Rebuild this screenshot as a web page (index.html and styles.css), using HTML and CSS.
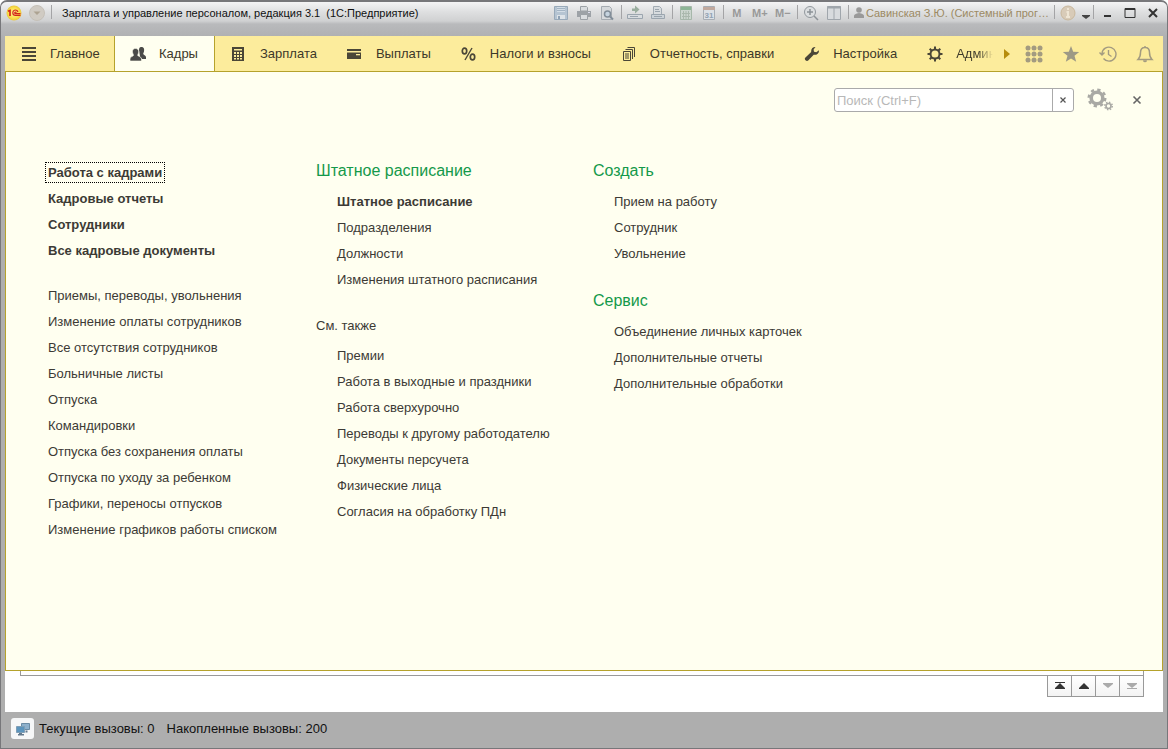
FILE: index.html
```html
<!DOCTYPE html>
<html lang="ru">
<head>
<meta charset="utf-8">
<title>Зарплата и управление персоналом, редакция 3.1 (1С:Предприятие)</title>
<link rel="stylesheet" href="styles.css">
</head>
<body>
<div class="window">
  <header class="titlebar">
    <svg class="logo" viewBox="0 0 16 16"><defs><radialGradient id="sun"><stop offset="0" stop-color="#fff6a0"/><stop offset=".7" stop-color="#fbe04a"/><stop offset="1" stop-color="#e9c63c"/></radialGradient></defs><circle cx="8" cy="8" r="7.500" fill="url(#sun)"/><path d="M2 6.300 4 5.500V11" fill="none" stroke="#d3281c" stroke-width="1.700"/><path d="M12 7C11.500 5.500 10.500 5 9.500 5 7.800 5 6.800 6.300 6.800 7.800 6.800 9.500 8 10.400 9.500 10.400H14.500M10.500 7.500C9.500 6.700 8.700 7.200 8.700 7.900 8.700 8.500 9.200 8.700 9.700 8.700H14.500" fill="none" stroke="#d3281c" stroke-width="1.200"/></svg>
    <button class="tb main-menu" aria-label="Главное меню"><svg viewBox="0 0 16 16"><circle cx="8" cy="8" r="7.500" fill="#d0cbc3" stroke="#c5c0b8"/><path d="M4.500 6.500h7L8 10z" fill="#ada392"/></svg></button>
    <span class="sep"></span>
    <h1 class="title">Зарплата и управление персоналом, редакция 3.1 &nbsp;(1С:Предприятие)</h1>
    <div class="tools">
      <button class="tb" aria-label="Сохранить"><svg viewBox="0 0 16 16"><path d="M1.500 1.500h13v13h-13z" fill="#b5c4d2" stroke="#98a9b9"/><path d="M4 2h8v5H4z" fill="#d3dde6"/><path d="M4 3.500h8M4 5.500h8" stroke="#a3b4c4"/><path d="M4 10h8v4H4z" fill="#dde3e8"/><path d="M5 11h2v3H5z" fill="#8fa2b5"/></svg></button>
      <button class="tb" aria-label="Печать"><svg viewBox="0 0 16 16"><path d="M4.500 1.500h6l1 1V6h-7z" fill="#dadde0" stroke="#9ca1a6"/><path d="M1 6h14v6H1z" fill="#9da2a7"/><path d="M4.500 9.500h7v5h-7z" fill="#dadde0" stroke="#9ca1a6"/><path d="M12 7h2v1h-2z" fill="#dde"/></svg></button>
      <button class="tb" aria-label="Просмотр"><svg viewBox="0 0 16 16"><path d="M2.500 1.500h8l2 2v11h-10z" fill="#d6d9dc" stroke="#a5abb1"/><circle cx="8.500" cy="9" r="3" fill="#c5d3df" stroke="#818d98" stroke-width="1.500"/><path d="m11 11.500 3 3" stroke="#818d98" stroke-width="2"/></svg></button>
      <span class="sep"></span>
      <button class="tb" aria-label="Получить ссылку"><svg viewBox="0 0 16 16"><path d="M.500 9.500h15v4H.500z" fill="#d8dcdf" stroke="#9ba5ae"/><path d="M3 11.500h8" stroke="#9ba5ae"/><path d="M5 3.500h3V.500l4.500 4-4.500 4V6H5z" fill="#9aae9f"/></svg></button>
      <button class="tb" aria-label="Перейти по ссылке"><svg viewBox="0 0 16 16"><path d="M3.500 9V1.500h6l2 2V9" fill="#d8dcdf" stroke="#a2abb3"/><path d="M1.500 9.500h13v4h-13z" fill="#cbd2d8" stroke="#9ba5ae"/><path d="M4 11.500h8M5 4.500h4M5 6.500h5" stroke="#9ba5ae"/></svg></button>
      <span class="sep"></span>
      <button class="tb" aria-label="Калькулятор"><svg viewBox="0 0 16 16"><path d="M2.500 1.500h11v13h-11z" fill="#cbd5ce" stroke="#a6b7aa"/><path d="M3 2h10v3H3z" fill="#8eb697"/><path d="M5.500 6v8M8 6v8M10.500 6v8M4 8.500h8M4 11.500h8" stroke="#aab8ad"/></svg></button>
      <button class="tb" aria-label="Календарь"><svg viewBox="0 0 16 16"><path d="M2.500 1.500h11v13h-11z" fill="#dce1e6" stroke="#a8aeb5"/><path d="M2 2h12v3H2z" fill="#c2aa9f"/><text x="8" y="13" text-anchor="middle" font-size="8" font-weight="bold" fill="#91a1b2">31</text></svg></button>
      <span class="sep"></span>
      <button class="tb mem">M</button><button class="tb mem">M+</button><button class="tb mem">M−</button>
      <span class="sep"></span>
      <button class="tb" aria-label="Масштаб"><svg viewBox="0 0 16 16"><circle cx="7" cy="7" r="5.500" fill="#dcdfe1" stroke="#92989d"/><path d="M7 4v6M4 7h6M11 11l4 4" stroke="#8c9297" stroke-width="1.500"/></svg></button>
      <button class="tb" aria-label="Панели"><svg viewBox="0 0 16 16"><path d="M1.500 1.500h13v13h-13zM8 3v12" fill="#d8dbde" stroke="#a0a6ac"/><path d="M1 2.500h14" stroke="#a0a6ac" stroke-width="2"/></svg></button>
      <span class="sep"></span>
      <svg class="person" viewBox="0 0 10 12"><circle cx="5" cy="3" r="2.800" fill="#999"/><path d="M0 11V9q0-2 5-3 5 1 5 3v2z" fill="#999"/></svg>
      <span class="user">Савинская З.Ю. (Системный прог…</span>
      <span class="sep"></span>
      <button class="tb" aria-label="Информация"><svg viewBox="0 0 16 16"><circle cx="8" cy="8" r="7" fill="#d8cbb8" stroke="#c9b89d"/><path d="M8 3v2M6.500 7H8v5M6 12h4" fill="none" stroke="#eee5d4" stroke-width="2"/></svg></button>
      <button class="tb small" aria-label="Ещё"><svg viewBox="0 0 10 16"><path d="M1 10h8v1L5 14 1 11z" fill="#444"/></svg></button>
      <span class="sep"></span>
      <button class="tb win" aria-label="Свернуть"><svg viewBox="0 0 14 14"><path d="M4 10h7" stroke="#333" stroke-width="2"/></svg></button>
      <button class="tb win" aria-label="Развернуть"><svg viewBox="0 0 14 14"><path d="M2 2.500h10v9H2z" fill="none" stroke="#333"/><path d="M2 3h10" stroke="#333" stroke-width="2"/></svg></button>
      <button class="tb win" aria-label="Закрыть"><svg viewBox="0 0 14 14"><path d="m3 3 8 8M11 3l-8 8" stroke="#333" stroke-width="2"/></svg></button>
    </div>
  </header>

  <nav class="sections">
    <a class="section first" href="#"><svg viewBox="0 0 16 16"><path d="M1 2h14M1 6h14M1 10h14M1 14h14" stroke="#4a4637" stroke-width="2"/></svg>Главное</a>
    <a class="section active" href="#"><svg viewBox="0 0 16 16"><path d="M11 1c3 0 3.500 2 3 4.500-.3 1.200-.8 2-.8 2.500 0 .8 2.800 1.500 2.800 3V13h-4c-.5-1.500-2-2-2-2.500L9 4c0-2 .8-3 2-3z" fill="#4a4a48"/><path d="M5.500 2.500C8.500 2.500 9 5 8.500 7c-.3 1.200-.8 1.600-.8 2.300 0 1 3.800 1.300 3.800 3.700v2H0v-2c0-2.400 3.500-2.700 3.500-3.700 0-.7-.5-1.100-.8-2.300C2.200 5 2.500 2.500 5.500 2.500z" fill="#4a4a48" stroke="#fffff0" stroke-width=".6"/></svg>Кадры</a>
    <a class="section" href="#"><svg viewBox="0 0 16 16"><path d="M1 1h12v14H1z" fill="#4a4637"/><path d="M3 3h8v1.500H3zM3 6h2v2H3zM6 6h2v2H6zM9 6h2v2H9zM3 9h2v2H3zM6 9h2v2H6zM9 9h2v2H9zM3 12h2v1.500H3zM6 12h2v1.500H6zM9 12h2v1.500H9z" fill="#fcec9c"/></svg>Зарплата</a>
    <a class="section" href="#"><svg viewBox="0 0 16 16"><path d="M0 3h14v2H0zM0 6.500h14V13H0z" fill="#4a4637"/><path d="M9 8h4v1.300H9z" fill="#fcec9c"/></svg>Выплаты</a>
    <a class="section" href="#"><svg viewBox="0 0 16 16"><path d="M11 2 4 14" stroke="#4a4637" stroke-width="1.400"/><ellipse cx="3.500" cy="5" rx="2.200" ry="2.800" fill="none" stroke="#4a4637" stroke-width="1.700"/><ellipse cx="11.500" cy="11" rx="2.200" ry="2.800" fill="none" stroke="#4a4637" stroke-width="1.700"/></svg>Налоги и взносы</a>
    <a class="section" href="#"><svg viewBox="0 0 16 16"><path d="M2.500 5.500h7v9h-7zM4.500 3.500h7v9.500M6.500 1.500h7v9.500M4 8h4M4 10h4M4 12h4" fill="none" stroke="#4a4637"/></svg>Отчетность, справки</a>
    <a class="section" href="#"><svg viewBox="0 0 16 16"><path d="M11.500 1C9 .8 6.700 2.800 7.200 6L1.200 11.800C-.2 13.400 2.500 16 4.200 14.600L9.700 8.800C12.800 9.300 15.300 7 15 4.200L12.300 6.300 10 5.800 9.600 3.500z" fill="#4a4637"/></svg>Настройка</a>
    <a class="section" href="#"><svg viewBox="0 0 16 16"><circle cx="8" cy="8" r="4.500" fill="none" stroke="#4a4637" stroke-width="2"/><path d="M8 .5V4M8 12v3.500M.5 8H4M12 8h3.500M2.700 2.700 5 5M11 11l2.300 2.300M13.300 2.700 11 5M5 11l-2.300 2.300" stroke="#4a4637" stroke-width="2"/><circle cx="8" cy="8" r="3" fill="#fcec9c"/></svg><span class="fade">Админ</span></a>
    <div class="quick">
      <button class="more" aria-label="Далее"><svg viewBox="0 0 6 10"><path d="M0 0l6 5-6 5z" fill="#b78d0c"/></svg></button>
      <button aria-label="Все функции"><svg viewBox="0 0 18 18"><g fill="#a39b80"><circle cx="3" cy="3" r="2.500"/><circle cx="9" cy="3" r="2.500"/><circle cx="15" cy="3" r="2.500"/><circle cx="3" cy="9" r="2.500"/><circle cx="9" cy="9" r="2.500"/><circle cx="15" cy="9" r="2.500"/><circle cx="3" cy="15" r="2.500"/><circle cx="9" cy="15" r="2.500"/><circle cx="15" cy="15" r="2.500"/></g></svg></button>
      <button aria-label="Избранное"><svg viewBox="0 0 18 18"><path d="m9 1 2.200 5.700 6 .2-4.700 3.900 1.700 6L9 13.400l-5.200 3.400 1.700-6L.8 6.900l6-.2z" fill="#9d9985"/></svg></button>
      <button aria-label="История"><svg viewBox="0 0 18 18"><path d="M4.500 13.500A7 7 0 1 0 3 8.500V10M.5 7.500 3 10l2.500-2.500M9.500 5v4.500l3 2" fill="none" stroke="#a39b80" stroke-width="1.400"/></svg></button>
      <button aria-label="Оповещения"><svg viewBox="0 0 18 18"><path d="M2 14.500h14c-2-2-2.500-3-2.500-7 0-3-1.500-5-4.500-5s-4.500 2-4.500 5c0 4-.5 5-2.500 7zM9 2.500V1M7.500 15.500q1.500 2 3 0" fill="none" stroke="#a39b80" stroke-width="1.500"/></svg></button>
    </div>
  </nav>

  <main class="panel">
    <form class="search-row">
      <div class="search"><input type="text" aria-label="Поиск" placeholder="Поиск (Ctrl+F)"><button type="button" aria-label="Очистить"><svg viewBox="0 0 8 8"><path d="m1.500 1.500 5 5M6.500 1.500l-5 5" stroke="#555" stroke-width="1.200"/></svg></button></div>
      <button class="gears" type="button" aria-label="Настройки"><svg viewBox="0 0 26 24"><circle cx="10" cy="10" r="5.800" fill="none" stroke="#a9a9a4" stroke-width="3.600"/><circle cx="10" cy="10" r="8.300" fill="none" stroke="#a9a9a4" stroke-width="2.400" stroke-dasharray="3.260 3.260"/><circle cx="21.500" cy="18" r="2.500" fill="none" stroke="#a9a9a4" stroke-width="1.600"/><circle cx="21.500" cy="18" r="3.800" fill="none" stroke="#a9a9a4" stroke-width="1.400" stroke-dasharray="1.490 1.490"/></svg></button>
      <button class="close" type="button" aria-label="Закрыть"><svg viewBox="0 0 10 10"><path d="m1.500 1.500 7 7M8.500 1.500l-7 7" stroke="#666" stroke-width="1.600"/></svg></button>
    </form>
    <div class="columns">
      <div class="col first-col">
        <ul class="bold">
          <li><a class="focused" href="#">Работа с кадрами</a></li><li><a href="#">Кадровые отчеты</a></li><li><a href="#">Сотрудники</a></li><li><a href="#">Все кадровые документы</a></li>
        </ul>
        <ul>
          <li><a href="#">Приемы, переводы, увольнения</a></li><li><a href="#">Изменение оплаты сотрудников</a></li><li><a href="#">Все отсутствия сотрудников</a></li><li><a href="#">Больничные листы</a></li><li><a href="#">Отпуска</a></li><li><a href="#">Командировки</a></li><li><a href="#">Отпуска без сохранения оплаты</a></li><li><a href="#">Отпуска по уходу за ребенком</a></li><li><a href="#">Графики, переносы отпусков</a></li><li><a href="#">Изменение графиков работы списком</a></li>
        </ul>
      </div>
      <div class="col">
        <section><h2>Штатное расписание</h2>
        <ul><li><a class="strong" href="#">Штатное расписание</a></li><li><a href="#">Подразделения</a></li><li><a href="#">Должности</a></li><li><a href="#">Изменения штатного расписания</a></li></ul></section>
        <section><h3>См. также</h3>
        <ul><li><a href="#">Премии</a></li><li><a href="#">Работа в выходные и праздники</a></li><li><a href="#">Работа сверхурочно</a></li><li><a href="#">Переводы к другому работодателю</a></li><li><a href="#">Документы персучета</a></li><li><a href="#">Физические лица</a></li><li><a href="#">Согласия на обработку ПДн</a></li></ul></section>
      </div>
      <div class="col">
        <section><h2>Создать</h2>
        <ul><li><a href="#">Прием на работу</a></li><li><a href="#">Сотрудник</a></li><li><a href="#">Увольнение</a></li></ul></section>
        <section><h2>Сервис</h2>
        <ul><li><a href="#">Объединение личных карточек</a></li><li><a href="#">Дополнительные отчеты</a></li><li><a href="#">Дополнительные обработки</a></li></ul></section>
      </div>
    </div>
  </main>

  <div class="under">
    <div class="list-edge"></div>
    <div class="pager">
      <button aria-label="В начало"><svg viewBox="0 0 10 8"><path d="M0 0h10v1H0zM5 1l5 5v1H0V6z" fill="#333"/></svg></button>
      <button aria-label="Вверх"><svg viewBox="0 0 10 8"><path d="M5 1l5 5v1H0V6z" fill="#333"/></svg></button>
      <button disabled aria-label="Вниз"><svg viewBox="0 0 10 8"><path d="M0 1h10v1L5 6 0 2z" fill="#aaa"/></svg></button>
      <button disabled aria-label="В конец"><svg viewBox="0 0 10 8"><path d="M0 1h10v1L5 6 0 2zM0 6h10v1H0z" fill="#aaa"/></svg></button>
    </div>
  </div>

  <footer class="status">
    <button aria-label="Показатели"><svg viewBox="0 0 16 16"><path d="M6.500 2.500h8v6h-8z" fill="#8db0cc" stroke="#6a8ba5"/><path d="M1.500 5.500h8v6h-8z" fill="#5b94bd" stroke="#7e9db5"/><path d="M4 12h3v1h2v1.500H3V13h1zM10.500 9.500h2v2h-2z" fill="#63798c"/></svg></button>
    <span>Текущие вызовы: 0</span><span>Накопленные вызовы: 200</span>
  </footer>
</div>
</body>
</html>
```
FILE: styles.css
```css
* { box-sizing: border-box; }
html, body { height: 100%; margin: 0; }
body { font-family: "Liberation Sans", Arial, sans-serif; font-size: 13px; color: #3c3a35; background: #fff; }
button { margin: 0; padding: 0; border: 0; background: none; font: inherit; color: inherit; display: flex; align-items: center; justify-content: center; }
a { color: inherit; text-decoration: none; }
svg { display: block; flex: none; }
ul { list-style: none; margin: 0; padding: 0; }

.window { min-height: 100%; display: flex; flex-direction: column; padding: 0 4px 3px; border: 1px solid #77777a; border-top-width: 2px; border-radius: 7px 7px 0 0; background: linear-gradient(#f4f4f5 0, #dedfe0 10px, #d0d1d2 19px, #b9babc 22px, #b0b1b3 34px, #aeaeae 40px); }
.titlebar { display: flex; height: 34px; padding: 3px 2px 0 1px; align-items: flex-start; }
.logo, .tb svg { width: 16px; height: 16px; }
.tb { height: 16px; min-width: 16px; }
.main-menu { margin-left: 7px; }
.sep { width: 1px; height: 14px; margin: 0 6px; background: #a4a4a6; }
.title { margin: 0 0 0 4px; font-size: 11px; line-height: 17px; font-weight: normal; color: #111; white-space: nowrap; }
.tools { display: flex; margin-left: auto; gap: 7px; }
.tools .sep { margin: 0 -2px 0 -1px; }
.mem { font-size: 11px; font-weight: bold; color: #999; }
.person { width: 10px; height: 12px; margin-top: 2px; }
.user { margin: 0 -1px 0 -5px; font-size: 11px; line-height: 17px; color: #9c8a63; white-space: nowrap; }
.tb.small { min-width: 10px; margin: 0 -4px 0 -2px; }
.small svg { width: 10px; }
.win svg { width: 14px; height: 14px; }

.sections { display: flex; height: 36px; background: #fcec9c; border-bottom: 1px solid #b5a22c; }
.section { display: flex; align-items: center; gap: 13px; padding: 0 14px 0 16px; white-space: nowrap; color: #3c3829; }
.section svg { width: 16px; height: 16px; }
.first { width: 109px; }
.active { width: 101px; padding-left: 15px; background: #fffff0; border: solid #b5a22c; border-width: 0 1px; }
.fade { color: transparent; background: linear-gradient(90deg, #3c3829 22px, #fcec9c 37px); background-clip: text; -webkit-background-clip: text; }
.section:last-of-type { padding-right: 0; }
.quick { display: flex; align-items: center; gap: 19px; margin-left: auto; padding-right: 9px; }
.quick svg { width: 18px; height: 18px; }
.quick .more { margin-right: -4px; }
.quick .more svg { width: 6px; height: 10px; }

.panel { flex: 1; background: #fffff0; border: 1px solid #b5a22c; border-top: 0; }
.search-row { display: flex; justify-content: flex-end; align-items: center; height: 56px; padding-right: 20px; }
.search { display: flex; width: 240px; height: 24px; border: 1px solid #aaa; border-radius: 3px; background: #fff; overflow: hidden; }
.search input { flex: 1; min-width: 0; padding: 0 2px; border: 0; outline: 0; background: none; font: inherit; }
.search input::placeholder { color: #b8b8b8; opacity: 1; }
.search button { width: 21px; border-left: 1px solid #aaa; }
.search button svg { width: 8px; height: 8px; }
.gears { margin-left: 13px; }
.gears svg { width: 26px; height: 24px; }
.close { margin-left: 19px; }
.close svg { width: 10px; height: 10px; }

.columns { display: grid; grid-template-columns: 268px 277px auto; padding: 31px 42px 0; }
.col { display: flex; flex-direction: column; gap: 22px; }
.first-col { gap: 19px; padding-top: 1px; }
.col li { line-height: 26px; height: 26px; white-space: nowrap; }
.col section ul { padding-left: 21px; }
.col h2 { margin: 0 0 6px; font-size: 16px; line-height: 24px; font-weight: normal; color: #14994a; }
.col h3 { margin: 0 0 6px; font-size: 13px; line-height: 22px; font-weight: normal; }
.bold, .strong { font-weight: bold; }
.focused { outline: 1px dotted #000; outline-offset: 2px; }

.under { height: 41px; padding: 0 19px 0 15px; background: #fff; }
.list-edge { height: 5px; border: solid #999; border-width: 0 1px 1px; }
.pager { display: flex; justify-content: flex-end; }
.pager button { width: 24px; height: 21px; border: 1px solid #999; border-width: 0 0 1px 1px; background: linear-gradient(#fff, #f3f3f3); }
.pager button:last-child { width: 25px; border-right-width: 1px; }
.pager svg { width: 10px; height: 8px; }

.status { display: flex; align-items: center; gap: 12px; height: 33px; padding-left: 6px; background: #aeaeae; color: #111; }
.status button { width: 23px; height: 21px; margin-right: -7px; border-radius: 3px; background: #f6f7f8; }
.status svg { width: 16px; height: 16px; }
```
